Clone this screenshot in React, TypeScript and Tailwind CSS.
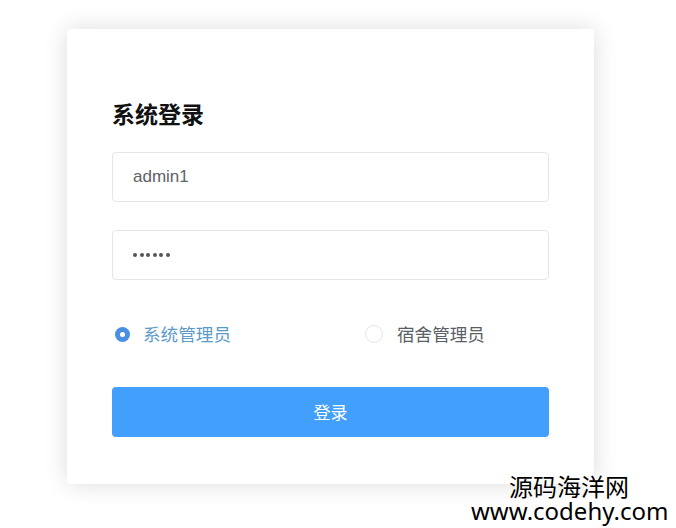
import React from "react";

export default function App() {
  const cjk = { fontFamily: '"Noto Sans CJK SC", "Noto Sans", sans-serif' };
  return (
    <div className="relative w-[676px] h-[528px] overflow-hidden bg-white">
      <div className="pl-[67px] pt-[29px]">
        <div className="w-[527px] h-[455px] bg-white rounded-[3px] shadow-[0_0_24px_rgba(0,0,0,0.14)] px-[45px] pt-[69px] flex flex-col">
          <div className="h-[30px] leading-[30px] text-[23px] font-bold text-[#111]" style={cjk}>
            系统登录
          </div>
          <div className="mt-[24px] h-[50px] rounded-[4px] border border-[#e3e5ea] flex items-center pl-[20px] text-[17px] text-[#606266] font-['Liberation_Sans',sans-serif]">
            admin1
          </div>
          <div className="mt-[28px] h-[50px] rounded-[4px] border border-[#e3e5ea] flex items-center pl-[20px] gap-[2.5px]">
            {[0, 1, 2, 3, 4, 5].map((i) => (
              <span key={i} className="w-[4px] h-[4px] rounded-full bg-[#555]" />
            ))}
          </div>
          <div className="mt-[44px] h-[20px] flex items-center">
            <div className="flex items-center">
              <span className="ml-[3px] w-[15px] h-[15px] rounded-full bg-[#4a90e2] flex items-center justify-center">
                <span className="w-[5px] h-[5px] rounded-full bg-white" />
              </span>
              <span className="ml-[13px] text-[17.6px] leading-[20px] text-[#5c9bc8]" style={cjk}>
                系统管理员
              </span>
            </div>
            <div className="flex items-center ml-[134px]">
              <span className="w-[18px] h-[18px] rounded-full border border-[#e4e6ea] bg-white" />
              <span className="ml-[14px] text-[17.6px] leading-[20px] text-[#5a5e66]" style={cjk}>
                宿舍管理员
              </span>
            </div>
          </div>
          <div className="mt-[43px] h-[50px] rounded-[4px] bg-[#429ffc] flex items-center justify-center text-white text-[17px]" style={cjk}>
            登录
          </div>
        </div>
      </div>
      <div
        className="absolute left-[509px] top-[474px] text-[24px] leading-[24px] text-black [text-shadow:0_0_2px_#fff,0_0_2px_#fff]"
        style={cjk}
      >
        源码海洋网
      </div>
      <div
        className="absolute left-[471px] top-[498px] text-[24px] leading-[26px] text-black [text-shadow:0_0_2px_#fff,0_0_2px_#fff]"
        style={{ fontFamily: '"Noto Sans", "Open Sans", sans-serif' }}
      >
        www.codehy.com
      </div>
    </div>
  );
}
